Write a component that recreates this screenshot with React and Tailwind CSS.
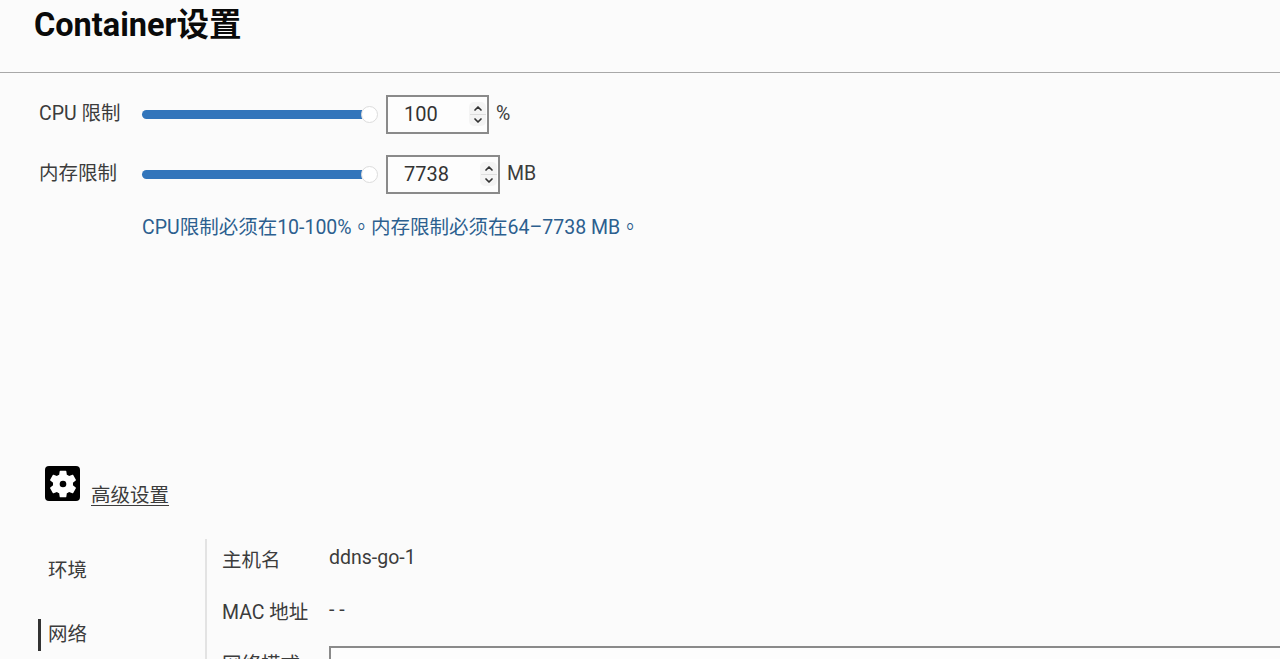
function Spin() {
  return (
    <span className="flex h-[24px] w-[17px] flex-col items-center justify-center rounded-[5px] bg-[#f4f4f4] text-[#333]">
      <svg width="10" height="11" viewBox="0 0 10 11" fill="none" stroke="currentColor" strokeWidth="1.7" strokeLinecap="round" strokeLinejoin="round"><path d="M2 7l3-3 3 3" /></svg>
      <span className="h-px w-[16px] bg-[#dddddd]" />
      <svg width="10" height="11" viewBox="0 0 10 11" fill="none" stroke="currentColor" strokeWidth="1.7" strokeLinecap="round" strokeLinejoin="round"><path d="M2 4l3 3 3-3" /></svg>
    </span>
  );
}
function Row({ label, value, unit, width, className }) {
  return (
    <div className={"flex h-[38px] items-center " + className}>
      <span className="w-[103px] text-[19.5px] leading-none text-[#3c3c3c]">{label}</span>
      <div className="flex w-[236px] items-center">
        <div className="h-[9px] w-[222px] rounded-l-full bg-[#3275bb]" />
        <div className="h-[17px] w-[17px] -ml-[1px] rounded-full border border-[#dcdcdc] bg-white" />
      </div>
      <div className={"ml-[8px] flex h-[39px] items-center justify-between border-2 border-[#8a8a8a] bg-[#fdfdfd] pl-[16px] pr-[1px] " + width}>
        <span className="text-[20px] leading-none text-[#333]">{value}</span>
        <Spin />
      </div>
      <span className="ml-[7px] text-[19.5px] leading-none text-[#3c3c3c]">{unit}</span>
    </div>
  );
}
export default function App() {
  return (
    <div className="h-[659px] w-[1280px] overflow-hidden bg-[#fbfbfb] font-['Roboto','Noto_Sans_CJK_SC',sans-serif]">
      <header className="h-[73px] border-b border-[#a8a8a8] pl-[34px] pt-[6px]">
        <h1 className="text-[32.5px] font-bold leading-[38px] text-[#0a0a0a]">Container设置</h1>
      </header>
      <section className="pl-[39px] pt-[22px]">
        <Row label="CPU 限制" value="100" unit="%" width="w-[103px]" />
        <Row label="内存限制" value="7738" unit="MB" width="w-[114px]" className="mt-[22px]" />
        <p className="mt-[22px] pl-[103px] font-['Roboto','Noto_Sans_CJK_TC',sans-serif] text-[19.5px] leading-[26px] text-[#2c5f8f]">CPU限制必须在10-100%。内存限制必须在64–7738 MB。</p>
      </section>
      <section className="mt-[225px] flex items-end pl-[45px]">
        <span className="flex h-[35px] w-[35px] items-center justify-center rounded-[4px] bg-black">
          <svg width="32" height="32" viewBox="0 0 24 24" fill="#fff" fillRule="evenodd">
            <path d="M19.43 12.98c.04-.32.07-.64.07-.98s-.03-.66-.07-.98l2.11-1.65c.19-.15.24-.42.12-.64l-2-3.46c-.12-.22-.39-.3-.61-.22l-2.49 1c-.52-.4-1.08-.73-1.69-.98l-.38-2.65A.49.49 0 0 0 14 2h-4c-.25 0-.46.18-.49.42l-.38 2.65c-.61.25-1.17.59-1.69.98l-2.49-1a.5.5 0 0 0-.61.22l-2 3.46c-.13.22-.07.49.12.64l2.11 1.65c-.04.32-.07.65-.07.98s.03.66.07.98l-2.11 1.65c-.19.15-.24.42-.12.64l2 3.46c.12.22.39.3.61.22l2.49-1c.52.4 1.08.73 1.69.98l.38 2.65c.03.24.24.42.49.42h4c.25 0 .46-.18.49-.42l.38-2.65c.61-.25 1.17-.59 1.69-.98l2.49 1c.23.09.49 0 .61-.22l2-3.46c.12-.22.07-.49-.12-.64l-2.11-1.65zM12 14.5a2.5 2.5 0 1 1 0-5 2.5 2.5 0 0 1 0 5z" />
          </svg>
        </span>
        <span className="ml-[11px] -mb-[8px] text-[19.5px] leading-[26px] text-[#3c3c3c] underline underline-offset-[3px]">高级设置</span>
      </section>
      <section className="mt-[38px] flex">
        <nav className="w-[207px] shrink-0 border-r-2 border-[#e3e3e3] pl-[38px] pt-[19px] text-[19.5px] leading-[26px] text-[#3c3c3c]">
          <div className="pl-[10px]">环境</div>
          <div className="mt-[35px] h-[32px] border-l-[3px] border-[#333] pl-[7px] leading-[32px]">网络</div>
        </nav>
        <div className="pl-[15px] pt-[9px] text-[19.5px] leading-[26px] text-[#3c3c3c]">
          <div className="flex">
            <span className="w-[107px]">主机名</span>
            <span className="-mt-[3px]">ddns-go-1</span>
          </div>
          <div className="mt-[26px] flex">
            <span className="w-[107px]">MAC 地址</span>
            <span className="-mt-[3px]">- -</span>
          </div>
          <div className="mt-[26px] flex">
            <span className="w-[107px]">网络模式</span>
            <div className="-mt-[6px] h-[40px] w-[960px] border-2 border-[#8a8a8a] bg-[#fdfdfd]" />
          </div>
        </div>
      </section>
    </div>
  );
}
